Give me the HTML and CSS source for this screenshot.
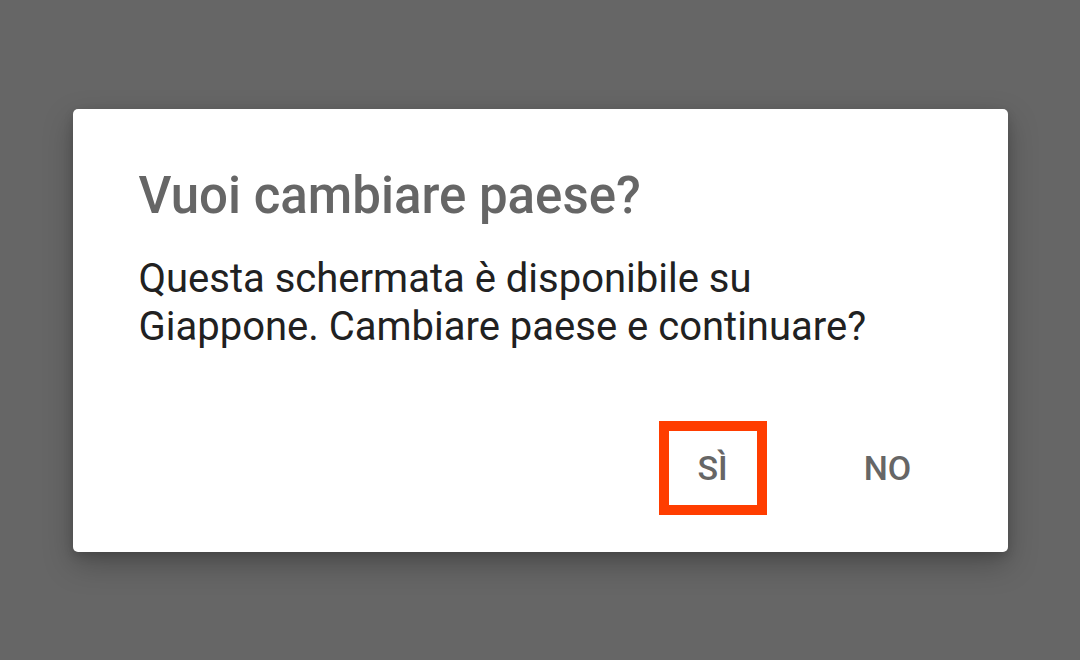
FILE: index.html
```html
<!DOCTYPE html>
<html lang="it">
<head>
  <meta charset="UTF-8">
  <title>Cambiare paese</title>
  <link rel="stylesheet" href="styles.css">
</head>
<body>
  <div class="dialog">
    <h1 class="dialog__title">Vuoi cambiare paese?</h1>
    <p class="dialog__text">Questa schermata è disponibile su<br>Giappone. Cambiare paese e continuare?</p>
    <div class="dialog__actions">
      <button class="dialog__btn dialog__btn--focus">SÌ</button>
      <button class="dialog__btn">NO</button>
    </div>
  </div>
</body>
</html>
```

FILE: styles.css
```css
html, body {
  margin: 0;
  height: 100%;
}
body {
  display: flex;
  justify-content: center;
  align-items: center;
  background: #666666;
  font-family: Roboto, "Noto Sans", sans-serif;
}
.dialog {
  width: 935px;
  height: 443px;
  box-sizing: border-box;
  background: #fff;
  border-radius: 5px;
  box-shadow: 0 12px 30px rgba(0,0,0,0.25), 0 4px 10px rgba(0,0,0,0.15);
  padding: 57px 66px 0;
  display: flex;
  flex-direction: column;
}
.dialog__title {
  margin: 0;
  font-size: 51px;
  font-weight: 500;
  line-height: 60px;
  color: #666666;
}
.dialog__text {
  margin: 29px 0 0;
  font-size: 40px;
  line-height: 48px;
  color: #212121;
}
.dialog__actions {
  display: flex;
  justify-content: flex-end;
  margin-top: 70px;
  gap: 67px;
}
.dialog__btn {
  width: 108px;
  height: 94px;
  box-sizing: border-box;
  border: 10px solid transparent;
  background: none;
  padding: 0;
  font-family: Roboto, "Noto Sans", sans-serif;
  font-size: 34px;
  font-weight: 500;
  color: #666666;
}
.dialog__btn--focus {
  border-color: #ff3d00;
}
```
